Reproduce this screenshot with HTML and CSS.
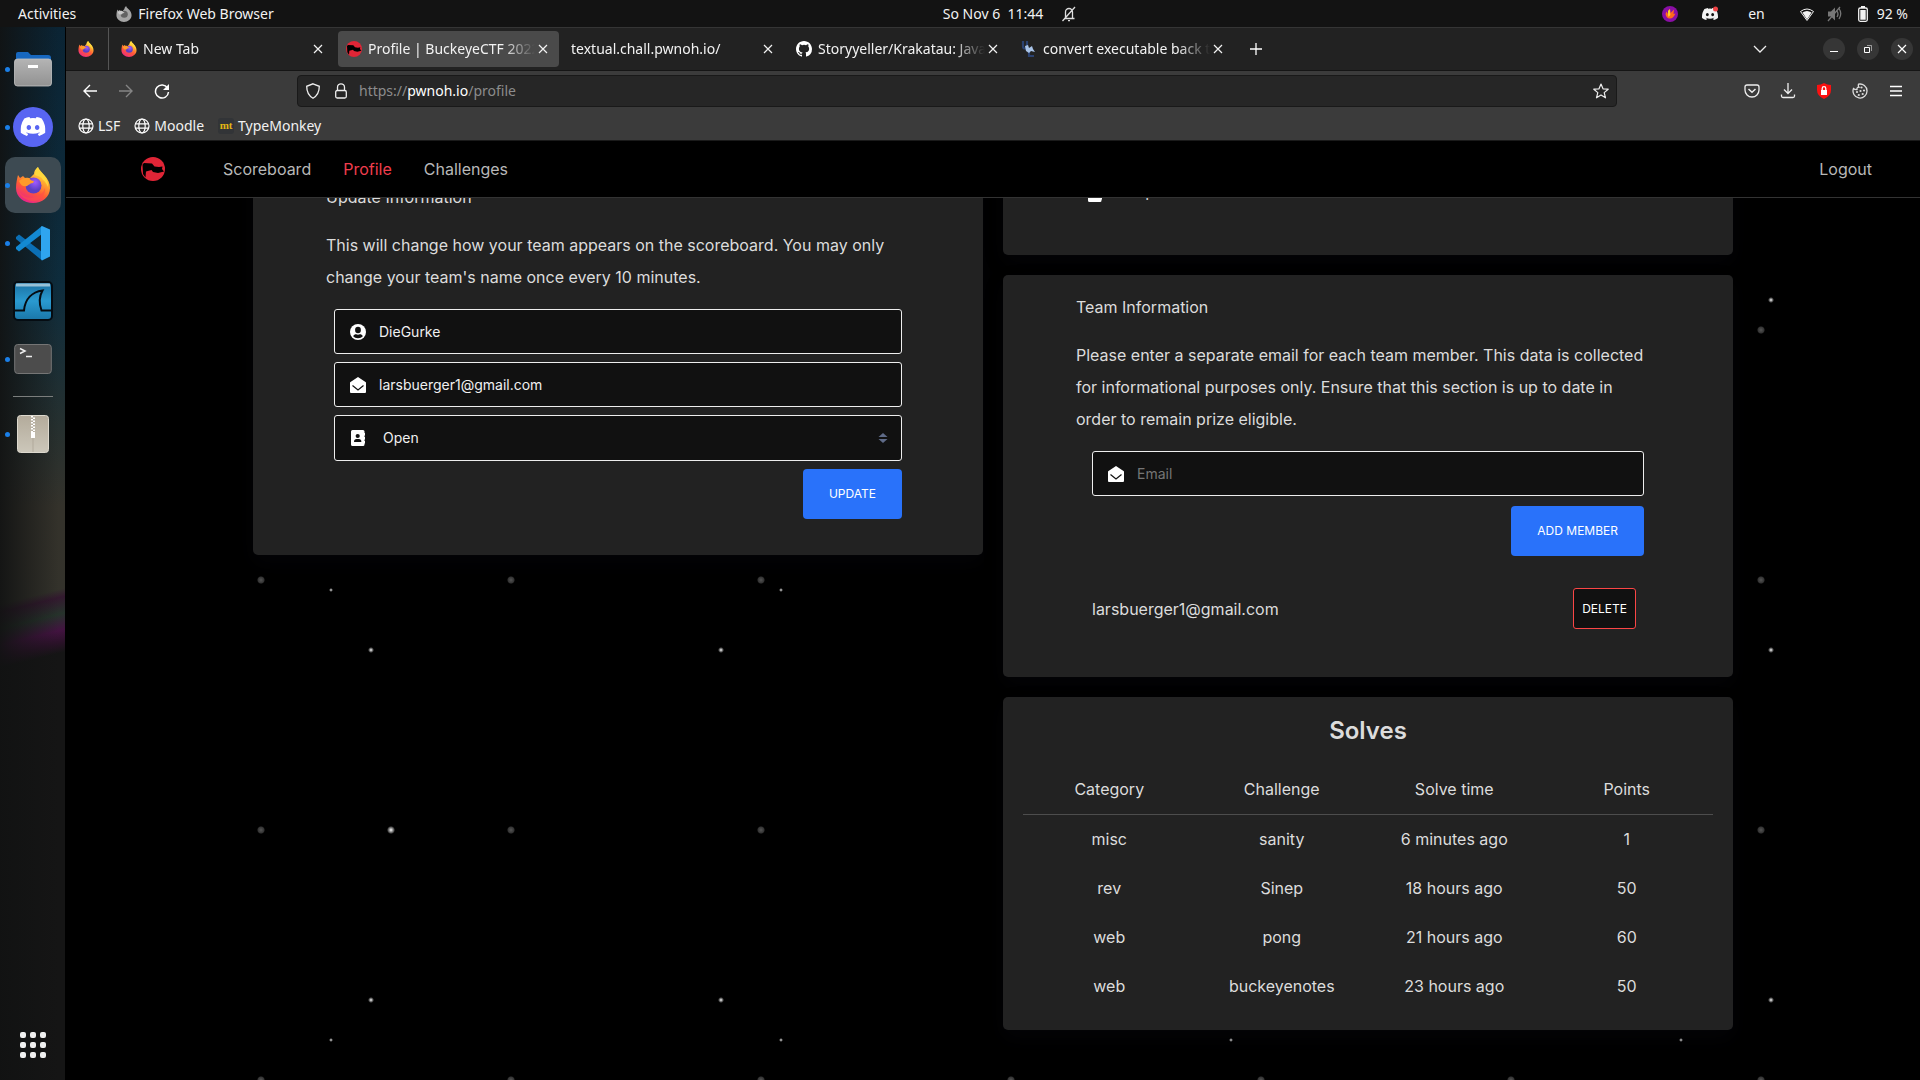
FILE: index.html
```html
<!DOCTYPE html>
<html lang="en">
<head>
<meta charset="utf-8">
<meta name="viewport" content="width=device-width, initial-scale=1">
<title>Profile | BuckeyeCTF 2022</title>
<link rel="stylesheet" href="styles.css">
</head>
<body>
<svg class="sprite" aria-hidden="true">
  <defs>
    <linearGradient id="ff-body" x1="0.8" y1="0" x2="0.3" y2="1"><stop offset="0" stop-color="#fff44f"/><stop offset="0.35" stop-color="#ffa930"/><stop offset="0.65" stop-color="#ff5a36"/><stop offset="1" stop-color="#e9218f"/></linearGradient>
    <radialGradient id="ff-globe" cx="0.6" cy="0.3"><stop offset="0" stop-color="#a05aff"/><stop offset="1" stop-color="#5b3fc4"/></radialGradient>
    <linearGradient id="folder" x1="0" y1="0" x2="0" y2="1"><stop offset="0" stop-color="#b4b4b4"/><stop offset="1" stop-color="#929292"/></linearGradient>
    <linearGradient id="shark" x1="0" y1="0" x2="0" y2="1"><stop offset="0" stop-color="#1b6fa0"/><stop offset="0.5" stop-color="#2a9ad0"/><stop offset="1" stop-color="#1a76a8"/></linearGradient>
    <linearGradient id="zip" x1="0" y1="0" x2="0" y2="1"><stop offset="0" stop-color="#b3ab9b"/><stop offset="1" stop-color="#ccc7ba"/></linearGradient>
  </defs>
  <symbol id="i-firefox" viewBox="0 0 36 36">
    <path fill="url(#ff-body)" d="M3 8l2 3 3-2 2 2 5 0 4-4c0-2 1-5 4-7 0 3 3 5 6 8 4 4 6 8 6 13 0 9-8 15-17 15S1 30 1 21c0-5 1-9 2-13z"/>
    <circle cx="18.500" cy="18.500" r="8" fill="url(#ff-globe)"/>
    <path fill="#ff9a2a" d="M4 14c3-3 7-4 10-3 1 2 3 3 5 3l-1 2c-3 0-4 2-6 3-3 1-6 0-8-5z"/>
    <path fill="#ffd83d" d="M20 8c0-3 1-6 3-8 1 3 4 5 6 8 3 3 4 8 4 12-2-4-3-6-5-7-1-3-5-4-8-5z"/>
    <path fill="#ff4f49" opacity=".6" d="M3 22c3 8 12 11 20 7 4-2 6-5 7-8 1 7-5 13-12 13S4 29 3 22z"/>
  </symbol>
  <symbol id="i-firefox-mono" viewBox="0 0 36 36">
    <path fill="#a5a5a5" d="M3 8l2 3 3-2 2 2 5 0 4-4c0-2 1-5 4-7 0 3 3 5 6 8 4 4 6 8 6 13 0 9-8 15-17 15S1 30 1 21c0-5 1-9 2-13z"/>
    <circle cx="18.500" cy="18.500" r="8" fill="#626262"/>
    <path fill="#c8c8c8" d="M4 14c3-3 7-4 10-3 1 2 3 3 5 3l-1 2c-3 0-4 2-6 3-3 1-6 0-8-5z"/>
  </symbol>
  <symbol id="i-buckeye" viewBox="0 0 24 24">
    <circle cx="12" cy="12" r="12" fill="#e02536"/>
    <path fill="#000" d="M1.500 7.500L3 6l8 .5 2.500 3 4.500.5 3.500-.5-.5 2.500 2 2.500-6 1.500-5-1-1.500-2L5 14.500l-.5 6L2 17z"/>
  </symbol>
  <symbol id="i-discord" viewBox="0 0 24 24"><path fill="currentColor" d="M20.317 4.37a19.79 19.79 0 0 0-4.885-1.515.074.074 0 0 0-.079.037c-.21.375-.444.864-.608 1.25a18.27 18.27 0 0 0-5.487 0 12.64 12.64 0 0 0-.617-1.25.077.077 0 0 0-.079-.037A19.74 19.74 0 0 0 3.677 4.37a.07.07 0 0 0-.032.027C.533 9.046-.32 13.58.099 18.057a.082.082 0 0 0 .031.057 19.9 19.9 0 0 0 5.993 3.03.078.078 0 0 0 .084-.028 14.09 14.09 0 0 0 1.226-1.994.076.076 0 0 0-.041-.106 13.1 13.1 0 0 1-1.872-.892.077.077 0 0 1-.008-.128c.126-.094.252-.192.372-.291a.074.074 0 0 1 .077-.01c3.928 1.793 8.18 1.793 12.062 0a.074.074 0 0 1 .078.009c.12.099.246.198.373.292a.077.077 0 0 1-.006.127 12.3 12.3 0 0 1-1.873.892.077.077 0 0 0-.041.107c.36.698.772 1.363 1.225 1.993a.076.076 0 0 0 .084.029 19.84 19.84 0 0 0 6.002-3.03.077.077 0 0 0 .032-.055c.5-5.177-.838-9.674-3.549-13.66a.061.061 0 0 0-.031-.028zM8.02 15.33c-1.183 0-2.157-1.086-2.157-2.419 0-1.333.955-2.419 2.157-2.419 1.21 0 2.176 1.096 2.157 2.42 0 1.332-.956 2.418-2.157 2.418zm7.975 0c-1.183 0-2.157-1.086-2.157-2.419 0-1.333.955-2.419 2.157-2.419 1.21 0 2.176 1.096 2.157 2.42 0 1.332-.946 2.418-2.157 2.418z"/></symbol>
  <symbol id="i-github" viewBox="0 0 16 16"><path fill="#fff" d="M8 0C3.58 0 0 3.58 0 8c0 3.54 2.290 6.530 5.470 7.590.4.070.55-.17.55-.38 0-.19-.01-.82-.01-1.490-2.010.37-2.530-.49-2.690-.94-.09-.23-.48-.94-.82-1.130-.28-.15-.68-.52-.01-.53.63-.01 1.080.58 1.230.82.72 1.210 1.870.87 2.330.66.070-.52.28-.87.51-1.070-1.780-.2-3.640-.89-3.640-3.950 0-.87.31-1.590.82-2.150-.08-.2-.36-1.020.08-2.120 0 0 .67-.21 2.200.82a7.600 7.600 0 0 1 4 0c1.530-1.040 2.200-.82 2.200-.82.44 1.100.16 1.920.08 2.120.51.56.82 1.270.82 2.150 0 3.070-1.870 3.750-3.650 3.950.29.25.54.73.54 1.480 0 1.070-.01 1.930-.01 2.200 0 .21.15.46.55.38A8 8 0 0 0 16 8c0-4.420-3.580-8-8-8z"/></symbol>
  <symbol id="i-close" viewBox="0 0 16 16"><path d="M4 4l8 8M12 4l-8 8" fill="none" stroke="currentColor" stroke-width="1.200"/></symbol>
  <symbol id="i-globe" viewBox="0 0 16 16"><g fill="none" stroke="#fff" stroke-width="1.200"><circle cx="8" cy="8" r="7"/><ellipse cx="8" cy="8" rx="3.200" ry="7"/><path d="M1 5.800h14M1 10.200h14"/></g></symbol>
  <symbol id="i-mail" viewBox="0 0 16 16"><path fill="#fff" d="M8 0l7.500 5c.3.200.5.500.5.900V15a1 1 0 0 1-1 1H1a1 1 0 0 1-1-1V5.900c0-.4.200-.7.500-.9z"/><path d="M2.500 8.500L8 13l5.500-4.500" fill="none" stroke="#111" stroke-width="1.200"/></symbol>
  <symbol id="i-user" viewBox="0 0 16 16"><circle cx="8" cy="8" r="8" fill="#fff"/><ellipse cx="8" cy="6" rx="2.900" ry="3.200" fill="#111"/><path fill="#111" d="M3.200 12.200c.6-1.600 1.600-2 3-2 1.200.6 2.400.6 3.600 0 1.400 0 2.400.4 3 2C11 14.800 5 14.800 3.200 12.200z"/></symbol>
  <symbol id="i-book" viewBox="0 0 16 16"><path fill="#fff" d="M2.500 0h10.500a1.500 1.500 0 0 1 1.500 1.500V3h.5v2.500h-.5V7h.5v2.500h-.5V11h.5v2.500h-.5v1A1.500 1.500 0 0 1 13 16H2.500A1.500 1.500 0 0 1 1 14.500v-13A1.500 1.500 0 0 1 2.500 0z"/><circle cx="7.700" cy="6" r="2.100" fill="#111"/><path fill="#111" d="M4 12c0-2.200 1-3 2.500-3h2.400c1.500 0 2.500.8 2.500 3z"/></symbol>
</svg>

<header class="topbar">
  <div class="topbar-side">
    <button class="plain">Activities</button>
    <button class="plain app-menu"><svg width="16" height="16"><use href="#i-firefox-mono"/></svg>Firefox Web Browser</button>
  </div>
  <button class="plain clock">So Nov 6&nbsp; 11:44
    <svg width="16" height="16" viewBox="0 0 16 16" fill="none" stroke="#ddd" stroke-width="1.300"><path d="M3 12.500h10.500M4.500 12.500V6a3.500 3.500 0 0 1 7 0v6.500M14 1L1.500 15M7 14.700h2"/></svg>
  </button>
  <div class="topbar-side tray">
    <svg width="16" height="16" viewBox="0 0 16 16"><circle cx="8" cy="8" r="8" fill="#8a0fa5"/><path fill="#ff6a1c" d="M3.500 8l1-2.500L6 8V5l2-2 .5 4L12 3.500 11.500 8l2-.5C12 11 10 13 7 12.500 5 12 4 10.500 3.500 8z"/><path fill="#ffd028" d="M6 9V5l2-2 .3 6L6.500 11z"/></svg>
    <svg class="tray-discord" width="16" height="16" viewBox="0 0 16 16"><use href="#i-discord" width="16" height="16"/><circle cx="13.500" cy="3" r="2.500" fill="#ed4245"/></svg>
    <span class="lang">en</span>
    <svg width="16" height="16" viewBox="0 0 16 16"><path fill="#f2f2f2" d="M3.500 6.500q4.500-3 9 0L8 13.500z"/><path d="M1.500 5.500q6.500-5 13 0L8 14.500z" fill="none" stroke="#f2f2f2"/></svg>
    <svg class="muted" width="16" height="16" viewBox="0 0 16 16"><path fill="#777" d="M1 5.500h3l4-4v13l-4-4H1z"/><path d="M10 5q2 3 0 6M12 2.500q3.500 5 0 10.500M1 15L13 1" fill="none" stroke="#777" stroke-width="1.300"/></svg>
    <svg width="16" height="16" viewBox="0 0 16 16"><rect x="3.700" y="2" width="8.600" height="13.300" rx="1.500" fill="none" stroke="#f2f2f2" stroke-width="1.300"/><path fill="#f2f2f2" d="M6 0h4v2H6zM5.300 4h5.400v9.700H5.300z"/></svg>
    <span class="battery">92 %</span>
  </div>
</header>

<div class="desktop">
  <nav class="dock" aria-label="Dock">
    <button class="dock-item running" aria-label="Files"><svg width="40" height="40" viewBox="0 0 40 40"><path fill="#1768c0" d="M3 5q0-2 2-2h10l3 3h17q3 0 3 3v6H3z"/><rect x="1.500" y="10" width="37" height="27" rx="3" fill="url(#folder)" stroke="#c4c4c4" stroke-width=".8"/><rect x="15" y="16" width="10" height="3" fill="#fff"/></svg></button>
    <button class="dock-item running" aria-label="Discord"><svg class="white" width="40" height="40" viewBox="0 0 40 40"><circle cx="20" cy="20" r="20" fill="#5865f2"/><use href="#i-discord" x="7.500" y="7" width="25" height="25"/></svg></button>
    <button class="dock-item running focused" aria-label="Firefox"><svg width="36" height="36"><use href="#i-firefox"/></svg></button>
    <button class="dock-item running" aria-label="Visual Studio Code"><svg width="36" height="36" viewBox="0 0 36 36"><path fill="#0b6fb5" d="M1 12l3-2.500L27 27v8.500L1 14z"/><path fill="#1389d2" d="M1 24l3 2.500L27 9V1L1 22z"/><path fill="#2fa5ef" d="M27 1l8 3.500v27L27 35.500l-1-1.500V2z"/></svg></button>
    <button class="dock-item" aria-label="Wireshark"><svg width="40" height="40" viewBox="0 0 40 40"><rect x="1" y="1" width="38" height="38" rx="4" fill="url(#shark)" stroke="#050c12" stroke-width="2"/><path fill="#b5d3e2" d="M3 2.500h34v3H3z" opacity=".8"/><path d="M1.500 29.500H11C12 18 19 11 29.500 9.500c-4 7-3.500 13-1 20H39" fill="none" stroke="#050c12" stroke-width="2"/></svg></button>
    <button class="dock-item running" aria-label="Terminal"><svg width="38" height="32" viewBox="0 0 38 32"><rect x=".7" y="1.500" width="36.600" height="29" rx="3" fill="#4c4c4c" stroke="#757575"/><path d="M6 5.500l5 2.500-5 2.500M12 13.500h6" fill="none" stroke="#eee" stroke-width="1.500"/></svg></button>
    <hr class="dock-rule">
    <button class="dock-item running" aria-label="Archive Manager"><svg width="32" height="38" viewBox="0 0 32 38"><rect x=".5" y=".5" width="31" height="37" rx="3" fill="url(#zip)" stroke="#ddd9ce"/><path d="M16 1v36" stroke="#a9a293" stroke-width=".7"/><path d="M15 1v16M17 2.500v16" stroke="#fff" stroke-width="2" stroke-dasharray="1.500 1.500"/><rect x="14" y="17" width="4" height="6" fill="#fff"/></svg></button>
    <button class="dock-item apps" aria-label="Show Applications"><svg width="26" height="26" viewBox="0 0 26 26" fill="#f0f0f0"><rect width="6" height="6" rx="2"/><rect x="10" width="6" height="6" rx="2"/><rect x="20" width="6" height="6" rx="2"/><rect y="10" width="6" height="6" rx="2"/><rect x="10" y="10" width="6" height="6" rx="2"/><rect x="20" y="10" width="6" height="6" rx="2"/><rect y="20" width="6" height="6" rx="2"/><rect x="10" y="20" width="6" height="6" rx="2"/><rect x="20" y="20" width="6" height="6" rx="2"/></svg></button>
  </nav>

  <div class="browser">
    <div class="tabstrip">
      <a class="pinned" href="#" aria-label="Firefox"><svg width="16" height="16"><use href="#i-firefox"/></svg></a>
      <div class="tab"><svg width="16" height="16"><use href="#i-firefox"/></svg><a href="#">New Tab</a><button class="close" aria-label="Close tab"><svg width="16" height="16"><use href="#i-close"/></svg></button></div>
      <div class="tab active"><svg width="16" height="16"><use href="#i-buckeye"/></svg><a href="#">Profile | BuckeyeCTF 2022</a><button class="close" aria-label="Close tab"><svg width="16" height="16"><use href="#i-close"/></svg></button></div>
      <div class="tab"><a href="#">textual.chall.pwnoh.io/</a><button class="close" aria-label="Close tab"><svg width="16" height="16"><use href="#i-close"/></svg></button></div>
      <div class="tab"><svg width="16" height="16"><use href="#i-github"/></svg><a href="#">Storyyeller/Krakatau: Java</a><button class="close" aria-label="Close tab"><svg width="16" height="16"><use href="#i-close"/></svg></button></div>
      <div class="tab"><svg width="16" height="16" viewBox="0 0 16 16"><path fill="none" stroke="#2b4270" stroke-width="2.200" d="M2 0v5.500q0 2 2 2t2-2V0M8 9.500V15h5"/><path fill="#a9c4e8" d="M4 5l3-1 1 3 3-2 1 3 2 3-4-1-2 2-3-2z"/></svg><a href="#">convert executable back t</a><button class="close" aria-label="Close tab"><svg width="16" height="16"><use href="#i-close"/></svg></button></div>
      <button class="new-tab" aria-label="New tab"><svg width="16" height="16" viewBox="0 0 16 16"><path d="M8 2v12M2 8h12" stroke="#fff" stroke-width="1.300"/></svg></button>
      <div class="window-buttons">
        <button class="all-tabs" aria-label="List all tabs"><svg width="16" height="16" viewBox="0 0 16 16"><path d="M2 5l6 6 6-6" fill="none" stroke="#eee" stroke-width="1.300"/></svg></button>
        <button class="round" aria-label="Minimize"><svg width="16" height="16" viewBox="0 0 16 16"><path d="M4 10.500h8" stroke="#fff"/></svg></button>
        <button class="round" aria-label="Restore"><svg width="16" height="16" viewBox="0 0 16 16" fill="none" stroke="#fff"><path d="M4.500 6.500h5v5h-5z"/><path d="M7 4.500h4.500V10" opacity=".5"/></svg></button>
        <button class="round" aria-label="Close"><svg class="white" width="16" height="16"><use href="#i-close"/></svg></button>
      </div>
    </div>

    <div class="toolbar">
      <div class="history">
        <button class="tool" aria-label="Back"><svg width="16" height="16" viewBox="0 0 16 16"><path d="M15 8H2M8 2L2 8l6 6" fill="none" stroke="#fff" stroke-width="1.400"/></svg></button>
        <button class="tool" aria-label="Forward" disabled><svg width="16" height="16" viewBox="0 0 16 16"><path d="M1 8h13M8 2l6 6-6 6" fill="none" stroke="#858585" stroke-width="1.400"/></svg></button>
        <button class="tool" aria-label="Reload"><svg width="16" height="16" viewBox="0 0 16 16"><path d="M13.500 5A6.500 6.500 0 1 0 14.500 9" fill="none" stroke="#fff" stroke-width="1.500"/><path fill="#fff" d="M15 1v6H9z"/></svg></button>
      </div>
      <div class="urlbar">
        <svg width="16" height="16" viewBox="0 0 16 16"><path d="M8 .8l6.300 2.500C14.300 9 12 13 8 15.200 4 13 1.700 9 1.700 3.300z" fill="none" stroke="#eee" stroke-width="1.300"/></svg>
        <svg width="16" height="16" viewBox="0 0 16 16"><path d="M4.500 7.500V4.300a3.500 3.500 0 0 1 7 0v3.200" fill="none" stroke="#eee" stroke-width="1.300"/><rect x="2.700" y="7.500" width="10.600" height="7.500" rx="1.500" fill="none" stroke="#eee" stroke-width="1.300"/></svg>
        <div class="url" role="textbox" contenteditable="true" spellcheck="false" aria-label="Address">https://<b>pwnoh.io</b>/profile</div>
        <svg width="16" height="16" viewBox="0 0 16 16"><path d="M8 1l2 4.800 5.200.4-4 3.400 1.300 5.200L8 12l-4.500 2.800 1.300-5.200-4-3.400L6 5.800z" fill="none" stroke="#eee" stroke-width="1.200" stroke-linejoin="round"/></svg>
      </div>
      <div class="extensions">
        <button class="tool" aria-label="Save to Pocket"><svg width="16" height="16" viewBox="0 0 16 16"><path d="M3 2h10q2 0 2 2v3a7 7 0 0 1-14 0V4q0-2 2-2z" fill="none" stroke="#eee" stroke-width="1.300"/><path d="M4.500 6L8 9.300 11.500 6" fill="none" stroke="#eee" stroke-width="1.500"/></svg></button>
        <button class="tool" aria-label="Downloads"><svg width="16" height="16" viewBox="0 0 16 16"><path d="M8 0v10M4 6.500l4 4 4-4M1.500 11.500V13q0 1.500 1.500 1.500h10q1.500 0 1.500-1.500v-1.500" fill="none" stroke="#eee" stroke-width="1.300"/></svg></button>
        <button class="tool" aria-label="Privacy shield"><svg width="16" height="16" viewBox="0 0 16 16"><path fill="#fb1111" d="M8 0q3 2 7 2v5q0 6-7 9-7-3-7-9V2q4 0 7-2z"/><path d="M6.200 7V5.500a1.800 1.800 0 0 1 3.600 0V7" fill="none" stroke="#fff" stroke-width="1.300"/><path fill="#fff" d="M5 7h6v5H5z"/></svg></button>
        <button class="tool" aria-label="Cookies"><svg width="16" height="16" viewBox="0 0 16 16"><path d="M6.500 1.200q-.5 2 .5 3-2.500.3-2 2.300Q3 6.800 1.500 5.500A7 7 0 1 0 6.500 1.200z" fill="none" stroke="#ddd" stroke-width="1.300"/><g fill="#ddd"><circle cx="9.500" cy="4.500" r="1.100"/><circle cx="8.500" cy="8" r="1.100"/><circle cx="12" cy="7.500" r="1.100"/><circle cx="5" cy="9" r="1.100"/><circle cx="6.800" cy="12" r="1.100"/><circle cx="10.700" cy="11" r="1.100"/></g></svg></button>
        <button class="tool" aria-label="Open menu"><svg width="16" height="16" viewBox="0 0 16 16"><path d="M2 3.500h12M2 8h12M2 12.500h12" stroke="#fff" stroke-width="1.300"/></svg></button>
      </div>
    </div>

    <div class="bookmarks">
      <a href="#"><svg width="16" height="16"><use href="#i-globe"/></svg>LSF</a>
      <a href="#"><svg width="16" height="16"><use href="#i-globe"/></svg>Moodle</a>
      <a href="#"><span class="mt">mt</span>TypeMonkey</a>
    </div>

    <div class="page">
      <nav class="site-nav">
        <a class="logo" href="#" aria-label="BuckeyeCTF"><svg width="24" height="24"><use href="#i-buckeye"/></svg></a>
        <a href="#">Scoreboard</a>
        <a class="current" href="#">Profile</a>
        <a href="#">Challenges</a>
        <a class="logout" href="#">Logout</a>
      </nav>

      <main class="viewport">
        <div class="columns">
          <section class="card form-card">
            <h2>Update Information</h2>
            <p>This will change how your team appears on the scoreboard. You may only change your team's name once every 10 minutes.</p>
            <form class="fields">
              <label class="field"><svg width="16" height="16"><use href="#i-user"/></svg><input type="text" value="DieGurke" aria-label="Team name"></label>
              <label class="field"><svg width="16" height="16"><use href="#i-mail"/></svg><input type="email" value="larsbuerger1@gmail.com" aria-label="Email"></label>
              <label class="field select-field"><svg width="16" height="16"><use href="#i-book"/></svg><select aria-label="Division"><option>Open</option></select><svg width="10" height="12" viewBox="0 0 10 12"><path fill="#5f6b88" d="M5 1l4.500 4H.5zM5 11l4.500-4H.5z"/></svg></label>
              <button class="primary" type="button">UPDATE</button>
            </form>
          </section>

          <div class="stack">
            <section class="card division-card"><svg width="16" height="16"><use href="#i-book"/></svg><span>Open</span></section>

            <section class="card form-card team-card">
              <h2>Team Information</h2>
              <p>Please enter a separate email for each team member. This data is collected for informational purposes only. Ensure that this section is up to date in order to remain prize eligible.</p>
              <form class="fields">
                <label class="field"><svg width="16" height="16"><use href="#i-mail"/></svg><input type="email" placeholder="Email" aria-label="Member email"></label>
                <button class="primary" type="button">ADD MEMBER</button>
              </form>
              <div class="member"><span>larsbuerger1@gmail.com</span><button class="delete" type="button">DELETE</button></div>
            </section>

            <section class="card solves">
              <h3>Solves</h3>
              <table>
                <thead><tr><th>Category</th><th>Challenge</th><th>Solve time</th><th>Points</th></tr></thead>
                <tbody>
                  <tr><td>misc</td><td>sanity</td><td>6 minutes ago</td><td>1</td></tr>
                  <tr><td>rev</td><td>Sinep</td><td>18 hours ago</td><td>50</td></tr>
                  <tr><td>web</td><td>pong</td><td>21 hours ago</td><td>60</td></tr>
                  <tr><td>web</td><td>buckeyenotes</td><td>23 hours ago</td><td>50</td></tr>
                </tbody>
              </table>
            </section>
          </div>
        </div>
      </main>
    </div>
  </div>
</div>
</body>
</html>
```

FILE: styles.css
```css
* { box-sizing: border-box; }

body {
  margin: 0;
  height: 100vh;
  overflow: hidden;
  display: flex;
  flex-direction: column;
  background: #000;
  color: #f2f2f2;
  font: 14px/20px "Noto Sans", "Open Sans", sans-serif;
}

button, input, select { font: inherit; color: inherit; }
button { border: 0; padding: 0; background: none; cursor: pointer; }
a { color: inherit; text-decoration: none; }
svg { display: block; flex: none; }
.sprite { position: absolute; width: 0; height: 0; }
.white { color: #fff; }

/* System bar */
.topbar {
  flex: none;
  height: 27px;
  display: flex;
  align-items: center;
  padding: 0 12px 0 18px;
  background: #131313;
}
.topbar-side { flex: 1 1 0; display: flex; align-items: center; }
.plain { display: flex; align-items: center; gap: 6px; white-space: nowrap; }
.app-menu { margin-left: 40px; }
.clock { gap: 18px; margin-left: 94px; }
.tray { justify-content: flex-end; }
.tray-discord { margin-left: 24px; color: #f2f2f2; }
.lang { margin: 0 34px 0 30px; }
.muted { margin: 0 12px; }
.battery { margin-left: 6px; }

.desktop { flex: 1; min-height: 0; display: flex; }

/* Dock */
.dock {
  flex: none;
  width: 66px;
  display: flex;
  flex-direction: column;
  align-items: center;
  gap: 2px;
  padding: 14px 0 7px;
  border-right: 1px solid #000;
  background:
    linear-gradient(90deg, rgba(17, 18, 18, 0.9), rgba(17, 18, 18, 0) 90%),
    linear-gradient(166deg, transparent 560px, #33192f 568px, #26332b 584px, #421340 600px, #2a1228 612px, #151515 622px),
    linear-gradient(180deg, #0b2434 0, #0e2c3c 260px, #26302f 400px, #34322b 480px, #33322b 590px, #151515 660px);
}
.dock-item {
  position: relative;
  width: 56px;
  height: 56px;
  border-radius: 10px;
  display: grid;
  place-items: center;
}
.running::before {
  content: "";
  position: absolute;
  left: 0;
  width: 5px;
  height: 5px;
  border-radius: 50%;
  background: #1a7fe8;
}
.focused { background: #3d4a52; }
.dock-rule { width: 40px; height: 1px; margin: 7px 0; border: 0; background: #7b7e7d; }
.apps { margin-top: auto; }

/* Browser window */
.browser { flex: 1; min-width: 0; display: flex; flex-direction: column; border-top: 1px solid #353535; }
.tabstrip {
  flex: none;
  height: 43px;
  display: flex;
  align-items: center;
  gap: 4px;
  padding-right: 7px;
  background: #222;
  border-bottom: 1px solid #151515;
}
.pinned { width: 43px; height: 42px; padding-right: 2px; display: grid; place-items: center; border-right: 1px solid #555; }
.tab {
  flex: 0 1 221px;
  min-width: 0;
  height: 36px;
  display: flex;
  align-items: center;
  gap: 6px;
  padding: 0 8px;
  border-radius: 4px;
}
.tab.active { background: #4a4a4a; }
.tab a {
  flex: 1;
  min-width: 0;
  overflow: hidden;
  white-space: nowrap;
  mask-image: linear-gradient(90deg, #000 calc(100% - 32px), transparent);
}
.tab .close { margin-left: -6px; }
.new-tab { margin-left: 10px; }
.window-buttons { margin-left: auto; display: flex; align-items: center; gap: 12px; }
.all-tabs { margin-right: 43px; }
.round { width: 22px; height: 22px; border-radius: 50%; background: #363636; display: grid; place-items: center; }

.toolbar { flex: none; height: 40px; display: flex; align-items: center; padding: 0 10px; background: #3b3b3b; }
.history { flex: 0 0 221px; display: flex; gap: 8px; }
.tool { width: 28px; height: 28px; display: grid; place-items: center; }
.urlbar {
  flex: 0 1 1320px;
  min-width: 0;
  height: 32px;
  display: flex;
  align-items: center;
  gap: 12px;
  padding: 0 7px;
  background: #262626;
  border: 1px solid #191919;
  border-radius: 4px;
}
.url { flex: 1; margin-left: -2px; color: #8c8c8c; outline: 0; white-space: nowrap; }
.url b { font-weight: 400; color: #fff; }
.extensions { margin-left: auto; display: flex; gap: 8px; }

.bookmarks {
  flex: none;
  height: 30px;
  display: flex;
  align-items: center;
  gap: 14px;
  padding: 0 12px;
  background: #3b3b3b;
  border-bottom: 1px solid #1a1a1a;
}
.bookmarks a { display: flex; align-items: center; gap: 4px; }
.mt {
  width: 16px;
  height: 16px;
  border-radius: 3px;
  background: #323437;
  color: #e2b714;
  font: bold 11px/15px "Liberation Serif", serif;
  text-align: center;
}

/* Site */
.page {
  flex: 1;
  min-height: 0;
  display: flex;
  flex-direction: column;
  color: #dcdcdc;
  font: 16px/32px Inter, Roboto, sans-serif;
  background-color: #000;
  background-image:
    radial-gradient(circle, #fff, rgba(255, 255, 255, 0.3) 3px, transparent 4px),
    radial-gradient(circle, #fff, rgba(255, 255, 255, 0.3) 2px, transparent 3px),
    radial-gradient(circle, #fff, rgba(255, 255, 255, 0.4) 1px, transparent 2px),
    radial-gradient(circle, #555, rgba(255, 255, 255, 0.2) 3px, transparent 4px);
  background-size: 650px 650px, 350px 350px, 450px 450px, 250px 250px;
  background-position: 0 364px, 130px 334px, 40px 224px, 70px 64px;
}
.site-nav {
  flex: none;
  height: 57px;
  display: flex;
  align-items: center;
  gap: 32px;
  padding: 0 48px 0 75px;
  background: #000;
  border-bottom: 1px solid #333;
  color: #b8b8b8;
}
.logo { margin-right: 26px; }
.current { color: #f03d4d; }
.logout { margin-left: auto; }

.viewport { flex: 1; min-height: 0; overflow: hidden; }
.columns {
  display: grid;
  grid-template-columns: 1fr 1fr;
  align-items: start;
  gap: 20px;
  width: 80%;
  max-width: 1480px;
  margin: -33px auto 0;
}
.stack { display: grid; gap: 20px; }
.card { background: #222; border-radius: 5px; padding: 16px 10% 36px; box-shadow: 0 8px 20px rgba(30, 30, 50, 0.15); }
.stack .card { min-width: 0; }

h2, h3, p { margin: 0; }
h2 { font-size: 16px; font-weight: 400; margin-bottom: 16px; }
h3 { font-size: 24px; font-weight: 600; text-align: center; }

.fields { display: flex; flex-direction: column; gap: 8px; margin-top: 16px; padding: 0 8px; }
.field {
  height: 45px;
  display: flex;
  align-items: center;
  gap: 12px;
  padding: 0 12px 0 15px;
  background: #111;
  border: 1px solid #eee;
  border-radius: 3px;
  color: #f0f0f0;
  font-size: 14px;
}
.field input, .field select {
  flex: 1;
  min-width: 0;
  height: 32px;
  padding: 0 1px;
  border: 0;
  outline: 0;
  background: none;
  appearance: none;
}
.select-field { height: 46px; padding-right: 13px; }
.field select { padding-left: 5px; }
.field input::placeholder { color: #757575; }

.primary {
  align-self: flex-end;
  height: 50px;
  padding: 0 26px;
  border-radius: 4px;
  background: #2972fa;
  color: #fff;
  font-size: 12px;
}

.division-card { height: 90px; display: flex; align-items: flex-start; gap: 30px; padding: 16px 84px; line-height: 20px; }
.division-card svg { margin-top: 5px; }

.team-card { padding-bottom: 48px; }
.team-card p { padding-right: 16px; }
.team-card .fields { padding: 0 16px; gap: 10px; }
.member { display: flex; align-items: center; justify-content: space-between; margin-top: 32px; padding: 0 24px 0 16px; }
.delete {
  height: 41px;
  padding: 0 8px;
  border: 1px solid #fa4646;
  border-radius: 3px;
  background: #111;
  color: #fff;
  font-size: 12px;
}

.stack .solves { padding: 18px 20px 20px; }
table { width: 100%; margin-top: 18px; border-collapse: collapse; table-layout: fixed; text-align: center; }
th, td { height: 49px; padding: 0; font-weight: 400; }
thead { border-bottom: 1px solid #4d4d4d; }
```
